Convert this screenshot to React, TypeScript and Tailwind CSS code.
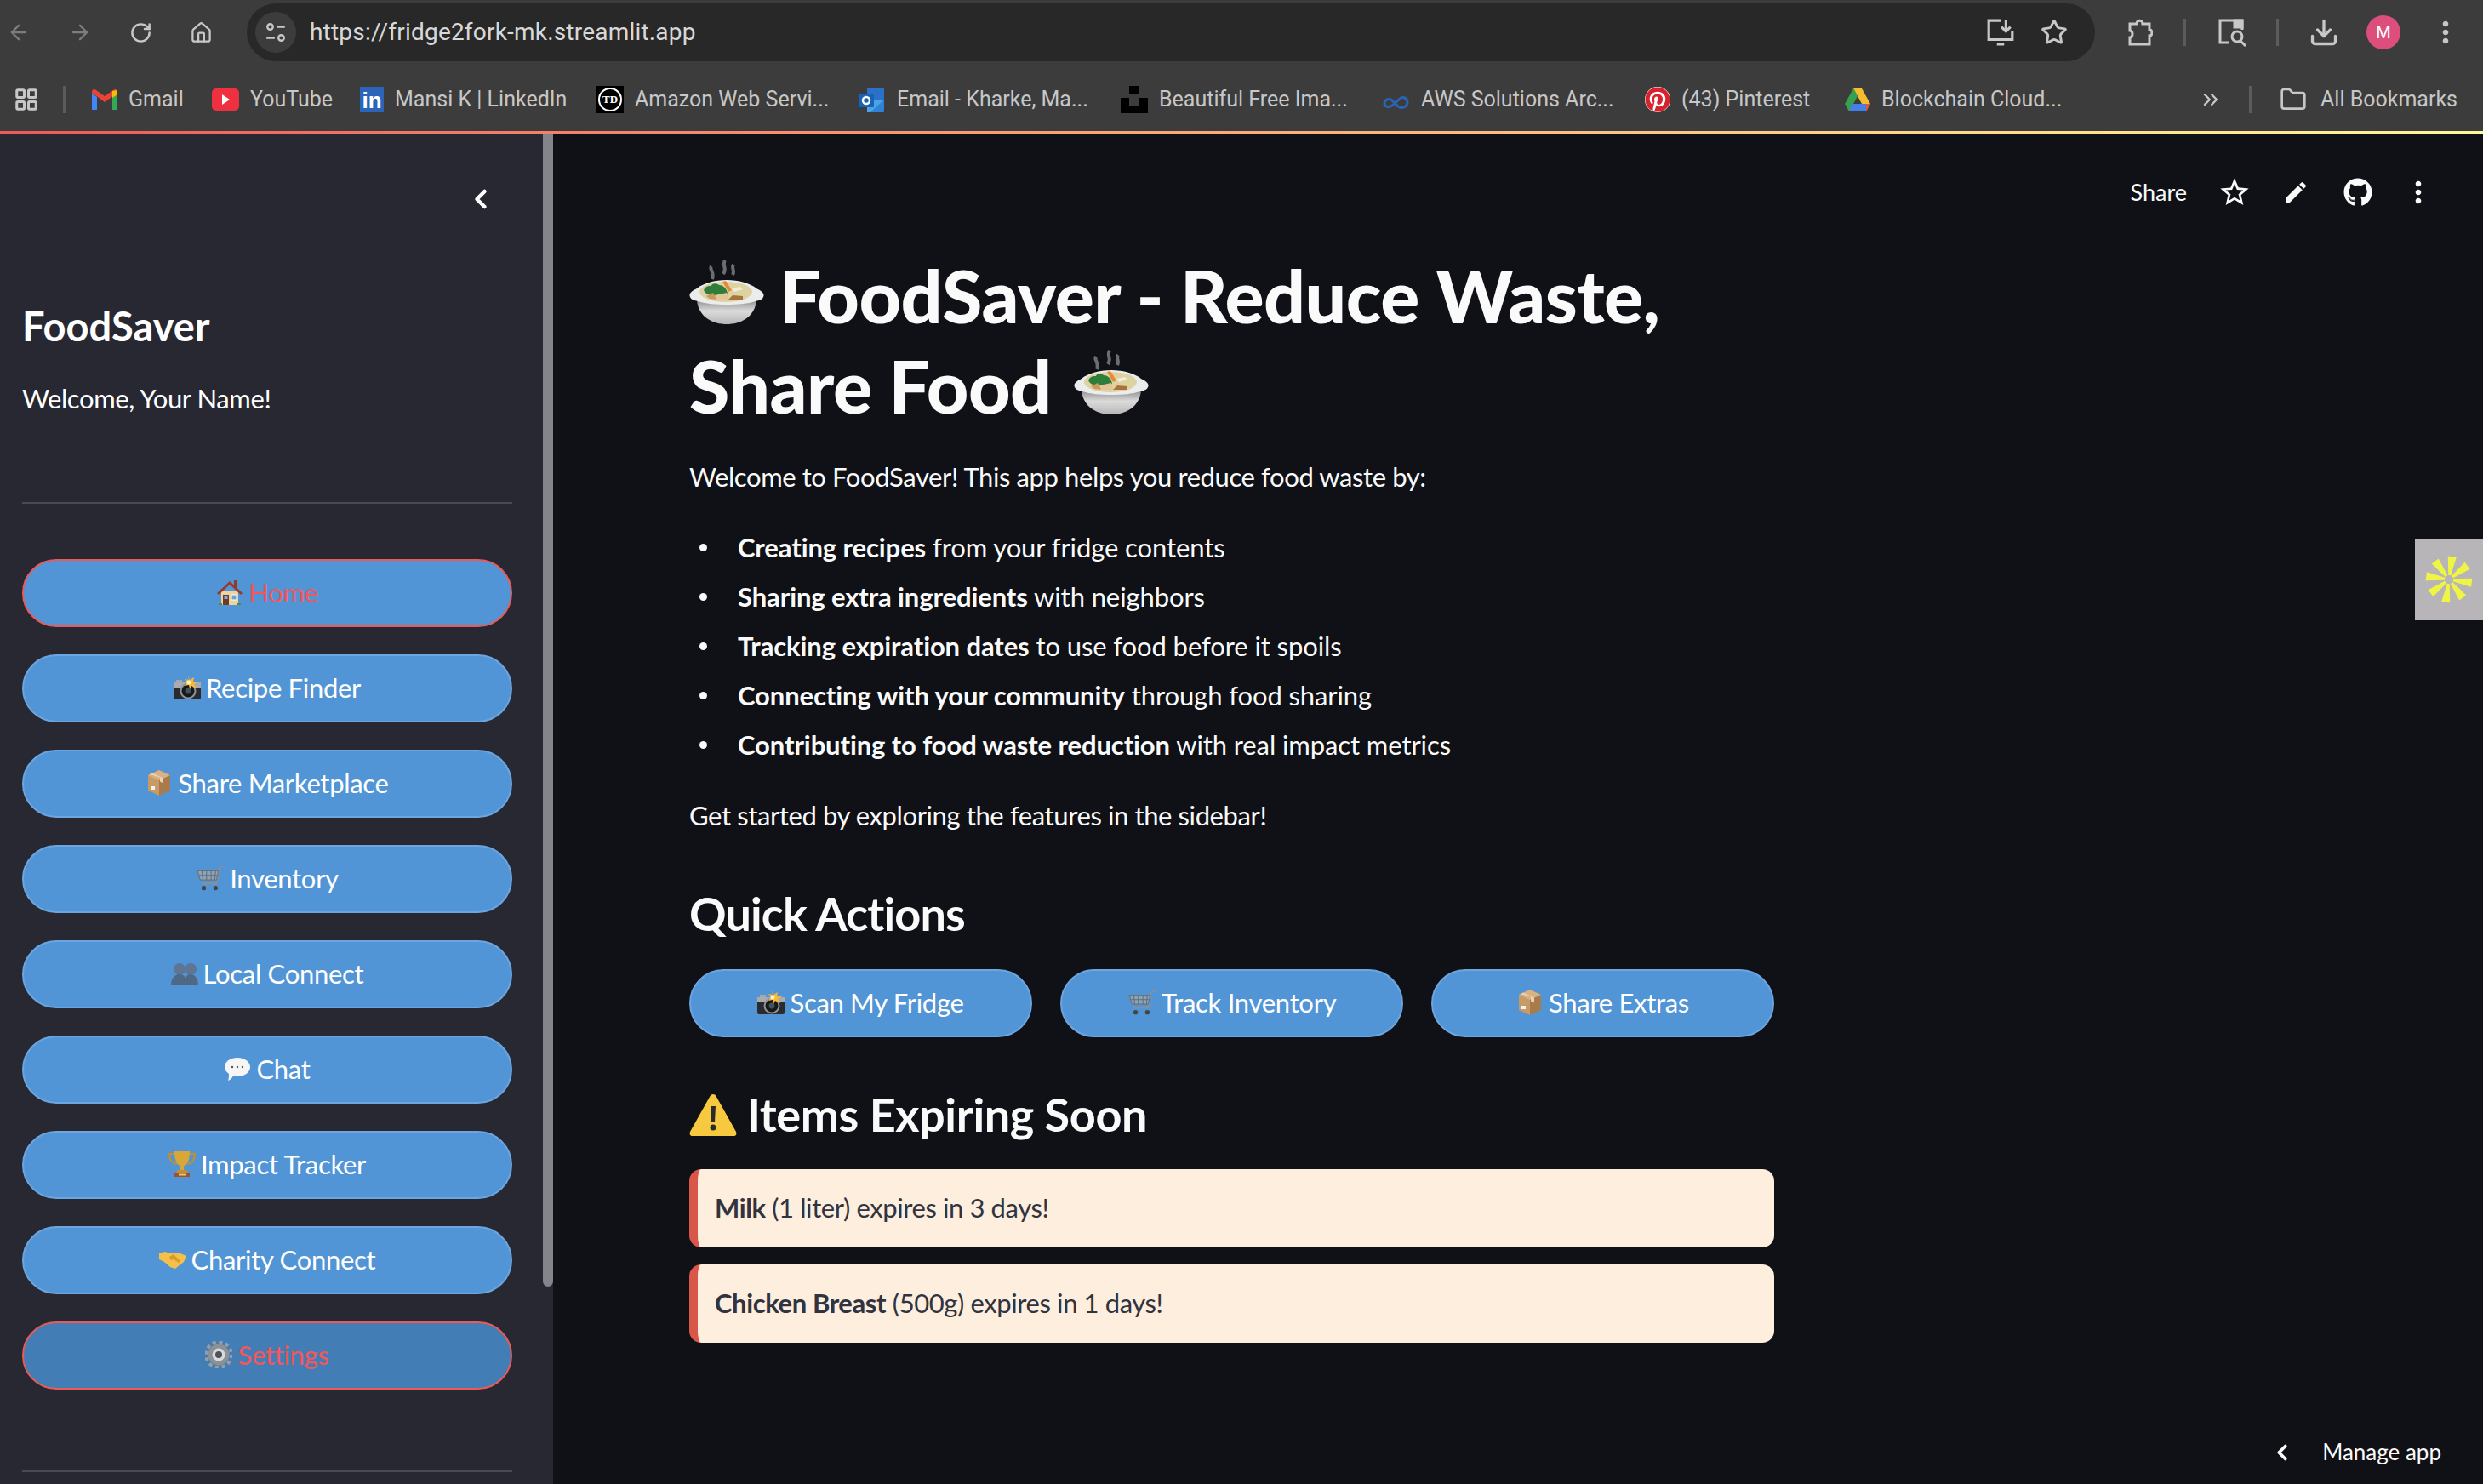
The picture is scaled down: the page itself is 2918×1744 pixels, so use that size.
import React from 'react';
import { ArrowLeft, ArrowRight, RotateCw, House, Star, Download, Folder, ChevronsRight, ChevronLeft, LayoutGrid } from 'lucide-react';
import { FaGithub, FaPinterest } from 'react-icons/fa';
import { MdEdit, MdMoreVert, MdStarBorder } from 'react-icons/md';

const Bowl = ({ className }: { className: string }) => (
    <svg viewBox="0 0 88 76" className={className}>
        <defs>
            <linearGradient id="bowlBody" x1="0" y1="0" x2="0" y2="1">
                <stop offset="0" stopColor="#8f8f8f" />
                <stop offset="0.45" stopColor="#dcdcdc" />
                <stop offset="1" stopColor="#b5b5b5" />
            </linearGradient>
        </defs>
        <path d="M26 8c-3 4 4 6 1 15M42 1c-4 6 3 9-2 16M52 6c-3 4 2 7-1 12" stroke="#b9b9b9" strokeWidth="4" fill="none" opacity="0.55" />
        <path d="M9 48C11 68 28 76 44 76S77 68 79 48z" fill="url(#bowlBody)" />
        <path d="M1 44c-2-4 2-7 8-10C16 28 30 24 44 24s28 4 35 10c6 3 10 6 8 10-1 3-5 4-9 5-9 3-21 4-34 4s-25-1-34-4c-4-1-8-2-9-5z" fill="#ececec" />
        <ellipse cx="43" cy="38" rx="31" ry="12" fill="#dcd2a2" />
        <path d="M17 36c3-6 7-5 9-5 0-3 6-4 9-1 4 0 9 3 10 10-4 3-14 4-20 2-4-1-7-3-8-6z" fill="#2f7d3a" />
        <path d="M39 26l4-1 7 11-4 2z" fill="#e8893a" />
        <path d="M20 43l8-4 5 8-9-1z" fill="#c99a5b" />
        <path d="M30 42l14-3 2 8H32z" fill="#e4c596" />
        <path d="M46 47l5-5 12 1 0 4z" fill="#a8743c" />
        <path d="M50 34l10-2 3 3-10 3z" fill="#f2ecd6" />
    </svg>
);

const Emoji = ({ name }: { name: string }) => {
    if (name === 'house')
        return (
            <svg viewBox="0 0 32 32" className="w-[32px] h-[34px]">
                <rect x="21" y="2" width="4" height="10" fill="#8c3b2c" />
                <rect x="6" y="14" width="20" height="17" fill="#ecd3a0" />
                <path d="M1 17L16 3l15 14-2 2L16 7 3 19z" fill="#9b3a2c" />
                <rect x="8" y="19" width="7" height="12" fill="#6f3a28" />
                <rect x="9.5" y="21" width="4" height="3" fill="#7fb0dc" />
                <rect x="18" y="19" width="6" height="6" fill="#6ea3d4" stroke="#fff" />
                <rect x="3" y="29" width="4" height="2" fill="#5d8a33" />
                <rect x="25" y="29" width="4" height="2" fill="#5d8a33" />
            </svg>
        );
    if (name === 'camera')
        return (
            <svg viewBox="0 0 32 28" className="w-[32px] h-[28px]">
                <rect x="3" y="5" width="7" height="4" fill="#a5a7aa" />
                <rect x="0" y="8" width="32" height="20" rx="2" fill="#2a2b2e" />
                <rect x="0" y="8" width="32" height="6" fill="#a9abae" />
                <circle cx="17" cy="18" r="8.500" fill="#17181a" stroke="#8f9296" strokeWidth="2" />
                <circle cx="17" cy="18" r="3.500" fill="#43505e" />
                <path d="M17 0l2 5 5-3-1 5 6 0-5 3 3 5-6-3-2 4-1-5-5 1 3-4-3-4 5 1z" fill="#f9b83a" />
                <circle cx="18" cy="8" r="2.500" fill="#fff3c0" />
            </svg>
        );
    if (name === 'box')
        return (
            <svg viewBox="0 0 32 32" className="w-[32px] h-[34px]">
                <path d="M16 1l13 6v18l-13 6z" fill="#a87b4c" />
                <path d="M16 1L3 7v18l13 6z" fill="#c79a66" />
                <path d="M3 7l13 6 13-6-13-6z" fill="#d8b184" />
                <path d="M8 4.500l13 6v6l-4 -2v-5L5 6z" fill="#e9d3b4" />
                <rect x="6" y="20" width="5" height="4" fill="#f2f2f2" />
            </svg>
        );
    if (name === 'cart')
        return (
            <svg viewBox="0 0 32 32" className="w-[34px] h-[34px]" fill="none">
                <path d="M30 3l-4 2-3 17H7" stroke="#8c8f94" strokeWidth="1.6" />
                <path d="M2 8h23l-2 10H5z" fill="#8da3b8" stroke="#6f7378" />
                <path d="M7 8l1 10M12 8v10M17 8v10M22 8l-1 10M3 13h21" stroke="#5f6f80" />
                <circle cx="9" cy="27" r="2.500" fill="#444" />
                <circle cx="22" cy="27" r="2.500" fill="#444" />
            </svg>
        );
    if (name === 'people')
        return (
            <svg viewBox="0 0 32 32" className="w-[32px] h-[32px]" fill="#5d7694">
                <circle cx="10" cy="11" r="7" />
                <circle cx="23" cy="11" r="7" />
                <path d="M0 30c0-8 4-13 10-13s8 4 8 13zM15 30c0-8 3-13 8-13s9 5 9 13z" fill="#4f6886" />
            </svg>
        );
    if (name === 'chat')
        return (
            <svg viewBox="0 0 32 32" className="w-[32px] h-[32px]">
                <path d="M16 3c9 0 15 5 15 11s-6 11-15 11c-2 0-4 0-5-1-1 3-3 5-6 6 1-3 1-5 1-8-3-2-5-5-5-8C1 8 7 3 16 3z" fill="#f6f6f6" />
                <circle cx="10" cy="14" r="1.200" fill="#555" />
                <circle cx="16" cy="14" r="1.200" fill="#555" />
                <circle cx="22" cy="14" r="1.200" fill="#555" />
            </svg>
        );
    if (name === 'trophy')
        return (
            <svg viewBox="0 0 32 32" className="w-[32px] h-[32px]" fill="none">
                <path d="M8 4H1c0 7 3 11 9 12M24 4h7c0 7-3 11-9 12" stroke="#c4902a" strokeWidth="2" />
                <path d="M7 1h18c0 11-3 16-7 17v5h-4v-5C10 17 7 12 7 1z" fill="#d9a63a" />
                <rect x="10" y="23" width="12" height="3" fill="#c4902a" />
                <rect x="7" y="26" width="18" height="5" fill="#a1522c" />
                <rect x="12" y="27.500" width="8" height="2" fill="#e8c46a" />
            </svg>
        );
    if (name === 'hands')
        return (
            <svg viewBox="0 0 32 24" className="w-[32px] h-[24px]">
                <path d="M0 5l7-2 6 2 5-1 7 1 7 3-3 7-4 3-6 5-6-2-7-6-6-3z" fill="#f5c04a" />
                <path d="M12 9l5-3 8 8-2 2-6-4-3 1z" fill="#dd9a2c" />
            </svg>
        );
    if (name === 'gear')
        return (
            <svg viewBox="0 0 32 32" className="w-[32px] h-[32px]">
                <circle cx="16" cy="16" r="15" fill="none" stroke="#9a9ea3" strokeWidth="4" strokeDasharray="4 3.850" />
                <circle cx="16" cy="16" r="12.500" fill="#8d9196" />
                <circle cx="16" cy="16" r="7.500" fill="#d7d9dc" />
                <circle cx="16" cy="16" r="4" fill="#4f5257" />
            </svg>
        );
    return null;
};

const navItems = [
    { emoji: 'house', label: 'Home', active: true },
    { emoji: 'camera', label: 'Recipe Finder' },
    { emoji: 'box', label: 'Share Marketplace' },
    { emoji: 'cart', label: 'Inventory' },
    { emoji: 'people', label: 'Local Connect' },
    { emoji: 'chat', label: 'Chat' },
    { emoji: 'trophy', label: 'Impact Tracker' },
    { emoji: 'hands', label: 'Charity Connect' },
    { emoji: 'gear', label: 'Settings', active: true, dark: true },
];

const bullets = [
    ['Creating recipes', ' from your fridge contents'],
    ['Sharing extra ingredients', ' with neighbors'],
    ['Tracking expiration dates', ' to use food before it spoils'],
    ['Connecting with your community', ' through food sharing'],
    ['Contributing to food waste reduction', ' with real impact metrics'],
];

const Favicon = ({ name }: { name: string }) => {
    if (name === 'gmail')
        return (
            <svg viewBox="0 0 30 24" className="w-[30px] h-[30px]">
                <path d="M0 4v20h6V9z" fill="#4285f4" />
                <path d="M24 9v15h6V4z" fill="#34a853" />
                <path d="M0 4l15 11L30 4v-1c0-3-3-4-5-2L15 8 5 1C3-1 0 0 0 3z" fill="#ea4335" />
                <path d="M24 2l6-1v5l-6 4z" fill="#fbbc04" />
            </svg>
        );
    if (name === 'youtube')
        return (
            <div className="w-[32px] h-[26px] rounded-[5px] bg-[#ee3040] flex items-center justify-center">
                <div className="w-0 h-0 border-y-[6px] border-y-transparent border-l-[9px] border-l-white" />
            </div>
        );
    if (name === 'linkedin')
        return <div className="w-[28px] h-[30px] bg-[#2b64b8] text-white font-bold text-[26px] leading-[32px] text-center font-['Liberation_Sans',sans-serif]">in</div>;
    if (name === 'td')
        return (
            <div className="w-[32px] h-[32px] bg-black flex items-center justify-center">
                <div className="w-[28px] h-[28px] rounded-full border-2 border-white text-white text-[13px] leading-[24px] font-bold text-center font-['Liberation_Serif',serif]">TD</div>
            </div>
        );
    if (name === 'outlook')
        return (
            <svg viewBox="0 0 32 30" className="w-[32px] h-[30px]">
                <rect x="10" y="1" width="20" height="14" fill="#2a71c9" />
                <path d="M10 15h20v13a2 2 0 0 1-2 2H10z" fill="#4aa3e8" />
                <path d="M14 30l16-15v13a2 2 0 0 1-2 2z" fill="#2d83d6" />
                <rect x="0" y="8" width="18" height="16" rx="1" fill="#1862b8" />
                <circle cx="9" cy="16" r="4" fill="none" stroke="#fff" strokeWidth="2.500" />
            </svg>
        );
    if (name === 'unsplash')
        return (
            <svg viewBox="0 0 32 32" className="w-[32px] h-[32px]">
                <rect x="10" y="0" width="12" height="9" fill="#000" />
                <path d="M0 14h10v9h12v-9h10v18H0z" fill="#000" />
            </svg>
        );
    if (name === 'aws')
        return (
            <svg viewBox="0 0 33 24" className="w-[33px] h-[24px]" fill="none" stroke="#2a64b4" strokeWidth="3">
                <path d="M3 17c0-6 7-7 10-3l6 6c4 3 11 1 11-5 0-5-6-7-9-4l-9 8c-4 3-9 1-9-2z" />
            </svg>
        );
    if (name === 'pinterest') return <FaPinterest className="w-[30px] h-[30px] text-[#d8232f] bg-white rounded-full" />;
    return (
        <svg viewBox="0 0 30 27" className="w-[30px] h-[27px]">
            <path d="M10 0h10l10 18H20z" fill="#f5bc2f" />
            <path d="M10 0l5 9L5 27l-5-9z" fill="#35a04d" />
            <path d="M8 18h22l-5 9H5z" fill="#4580e8" />
            <path d="M25 27l5-9h-5z" fill="#e2553c" />
        </svg>
    );
};

const bookmarks = [
    { icon: 'gmail', title: 'Gmail', width: 'w-[141px]' },
    { icon: 'youtube', title: 'YouTube', width: 'w-[174px]' },
    { icon: 'linkedin', title: 'Mansi K | LinkedIn', width: 'w-[278px]' },
    { icon: 'td', title: 'Amazon Web Servi...', width: 'w-[308px]' },
    { icon: 'outlook', title: 'Email - Kharke, Ma...', width: 'w-[308px]' },
    { icon: 'unsplash', title: 'Beautiful Free Ima...', width: 'w-[307px]' },
    { icon: 'aws', title: 'AWS Solutions Arc...', width: 'w-[309px]' },
    { icon: 'pinterest', title: '(43) Pinterest', width: 'w-[235px]' },
    { icon: 'drive', title: 'Blockchain Cloud...', width: 'w-[280px]' },
];

const ChromeBar = () => (
    <div className="bg-[#3c3c3c] text-[#c7c7c7] font-['Roboto',sans-serif]">
        <div className="h-[76px] pt-[4px] flex items-start">
            <div className="w-[290px] h-[68px] flex items-center pl-[8px] gap-[44px] shrink-0">
                <ArrowLeft size={28} strokeWidth={2} className="text-[#7d7d7d]" />
                <ArrowRight size={28} strokeWidth={2} className="text-[#7d7d7d]" />
                <RotateCw size={27} strokeWidth={2.200} />
                <House size={27} strokeWidth={2} />
            </div>
            <div className="w-[2172px] h-[68px] rounded-full bg-[#282828] flex items-center pl-[10px] pr-[32px] shrink-0">
                <div className="w-[48px] h-[48px] rounded-full bg-[#3c3c3c] flex items-center justify-center">
                    <svg viewBox="0 0 24 24" className="w-[26px] h-[26px]" fill="none" stroke="currentColor" strokeWidth="2.200">
                        <circle cx="6" cy="6" r="3" />
                        <path d="M13 6h9M2 18h9" />
                        <circle cx="18" cy="18" r="3" />
                    </svg>
                </div>
                <span className="ml-[16px] text-[28px] tracking-[0.2px] text-[#d8d8d8]">https://fridge2fork-mk.streamlit.app</span>
                <div className="ml-auto flex items-center gap-[30px]">
                    <svg viewBox="0 0 32 32" className="w-[34px] h-[34px]" fill="none" stroke="currentColor" strokeWidth="3">
                        <path d="M16 3H3v21h26v-9M12 29h8M22 2v13M17 10l5 5 5-5" />
                    </svg>
                    <Star size={32} strokeWidth={2.200} />
                </div>
            </div>
            <div className="h-[68px] flex items-center pl-[38px]">
                <svg viewBox="0 0 30 32" className="w-[30px] h-[32px]" fill="none" stroke="currentColor" strokeWidth="3">
                    <path d="M3 6h8c0-5 7-5 7 0h8v7c4 0 4 7 0 7v10H3v-8c4 0 4-8 0-8z" />
                </svg>
                <div className="w-[3px] h-[32px] bg-[#5c5c5c] ml-[36px]" />
                <svg viewBox="0 0 36 36" className="w-[36px] h-[36px] ml-[37px]" fill="none" stroke="currentColor" strokeWidth="3">
                    <path d="M14 30H3V4h26v11" />
                    <path d="M20 4h9v8h-9z" fill="currentColor" />
                    <circle cx="23" cy="23" r="6" />
                    <path d="M27 28l6 6" />
                </svg>
                <div className="w-[3px] h-[32px] bg-[#5c5c5c] ml-[33px]" />
                <Download size={36} strokeWidth={2.200} className="ml-[35px]" />
                <div className="w-[40px] h-[40px] rounded-full bg-[#dc4f7d] text-white text-[20px] flex items-center justify-center ml-[32px]">M</div>
                <MdMoreVert size={40} className="ml-[33px]" />
            </div>
        </div>
        <div className="h-[78px] flex items-center pt-[4px] pl-[16px] text-[25px]">
            <LayoutGrid size={30} strokeWidth={2.400} className="shrink-0" />
            <div className="w-[3px] h-[32px] bg-[#5c5c5c] ml-[28px] mr-[31px] shrink-0" />
            {bookmarks.map((b) => (
                <div key={b.title} className={`${b.width} flex items-center gap-[13px] shrink-0 whitespace-nowrap`}>
                    <Favicon name={b.icon} />
                    <span>{b.title}</span>
                </div>
            ))}
            <ChevronsRight size={28} className="ml-[136px] shrink-0" />
            <div className="w-[3px] h-[32px] bg-[#5c5c5c] ml-[31px] mr-[33px] shrink-0" />
            <Folder size={32} strokeWidth={2} className="shrink-0" />
            <span className="ml-[16px] whitespace-nowrap">All Bookmarks</span>
        </div>
        <div className="h-[4px] bg-linear-to-r from-[#ec5a5a] to-[#fff79a]" />
    </div>
);

const PillButton = ({ emoji, label, active, dark, w }: { emoji: string; label: string; active?: boolean; dark?: boolean; w: string }) => (
    <button
        className={`${w} h-[80px] rounded-[40px] border-2 flex items-center justify-center gap-[6px] text-[31px] tracking-[-0.3px] pb-[2px] ${
            active ? 'border-[#ea5a5a] text-[#f2575b]' : 'border-[#6ca5e0] text-white'
        } ${dark ? 'bg-[#437db5]' : 'bg-[#5295d6]'}`}
    >
        <Emoji name={emoji} />
        <span>{label}</span>
    </button>
);

const Sidebar = () => (
    <aside className="relative w-[650px] h-[1586px] shrink-0 bg-[#272831] text-white px-[26px] overflow-hidden">
        <div className="absolute top-0 right-0 w-[12px] h-[1354px] bg-[#85848b] rounded-b-[6px]" />
        <div className="h-[152px] flex items-center justify-end pr-[41px]">
            <ChevronLeft size={36} strokeWidth={3} />
        </div>
        <h2 className="mt-[44px] text-[47px] leading-[58px] font-bold">FoodSaver</h2>
        <p className="mt-[28px] text-[31px] leading-[56px] tracking-[-0.4px]">Welcome, Your Name!</p>
        <div className="w-[576px] h-[2px] bg-[#494a53] mt-[94px]" />
        <div className="w-[576px] mt-[65px] flex flex-col gap-[32px]">
            {navItems.map((item) => (
                <PillButton key={item.label} emoji={item.emoji} label={item.label} active={item.active} dark={item.dark} w="w-full" />
            ))}
        </div>
        <div className="w-[576px] h-[2px] bg-[#494a53] mt-[95px]" />
    </aside>
);

const Main = () => (
    <main className="relative flex-1 h-[1586px] bg-[#0f1116] text-[#fafafa] overflow-hidden">
        <div className="h-[136px] flex items-center justify-end pr-[56px] text-[27px]">
            <span>Share</span>
            <MdStarBorder size={40} className="ml-[36px]" />
            <MdEdit size={32} className="ml-[36px]" />
            <FaGithub size={34} className="ml-[40px]" />
            <MdMoreVert size={40} className="ml-[34px]" />
        </div>
        <div className="ml-[160px] w-[1275px]">
            <h1 className="text-[86px] leading-[106px] font-black tracking-[-0.5px] w-[1200px]">
                <Bowl className="inline-block w-[88px] h-[76px] mr-[18px] align-[-1px]" />
                FoodSaver - Reduce Waste, Share Food
                <Bowl className="inline-block w-[88px] h-[76px] ml-[26px] align-[-1px]" />
            </h1>
            <div className="text-[31px] leading-[58px] tracking-[-0.4px]">
                <p className="mt-[25px]">Welcome to FoodSaver! This app helps you reduce food waste by:</p>
                <ul className="mt-[25px] tracking-[-0.1px]">
                    {bullets.map(([strong, rest]) => (
                        <li key={strong} className="flex items-center whitespace-pre">
                            <span className="w-[9px] h-[9px] rounded-full bg-[#fafafa] ml-[12px] mr-[36px]" />
                            <span>
                                <strong className="font-bold">{strong}</strong>
                                {rest}
                            </span>
                        </li>
                    ))}
                </ul>
                <p className="mt-[25px]">Get started by exploring the features in the sidebar!</p>
            </div>
            <h2 className="mt-[53px] text-[54px] leading-[68px] font-bold tracking-[-0.9px]">Quick Actions</h2>
            <div className="mt-[31px] flex gap-[33px]">
                <PillButton emoji="camera" label="Scan My Fridge" w="flex-1" />
                <PillButton emoji="cart" label="Track Inventory" w="flex-1" />
                <PillButton emoji="box" label="Share Extras" w="flex-1" />
            </div>
            <h2 className="mt-[57px] text-[54px] leading-[68px] font-bold tracking-[-0.4px] flex items-center gap-[12px]">
                <svg viewBox="0 0 56 50" className="w-[56px] h-[50px]">
                    <path d="M28 1c2 0 3 1 4 3l23 41c1 3 0 5-3 5H4c-3 0-4-2-3-5L24 4c1-2 2-3 4-3z" fill="#f7c93e" />
                    <path d="M25 15h6l-1 19h-4z" fill="#2b2b2b" />
                    <circle cx="28" cy="40" r="3.500" fill="#2b2b2b" />
                </svg>
                Items Expiring Soon
            </h2>
            <div className="mt-[30px] flex flex-col gap-[20px] tracking-[-0.4px]">
                <div className="h-[92px] rounded-[14px] bg-[#fdeedd] border-l-[10px] border-[#d9574a] flex items-center pl-[20px] pb-[2px] text-[31px] text-[#31333f]">
                    <span><strong className="font-bold">Milk</strong> (1 liter) expires in 3 days!</span>
                </div>
                <div className="h-[92px] rounded-[14px] bg-[#fdeedd] border-l-[10px] border-[#d9574a] flex items-center pl-[20px] pb-[2px] text-[31px] text-[#31333f]">
                    <span><strong className="font-bold">Chicken Breast</strong> (500g) expires in 1 days!</span>
                </div>
            </div>
        </div>
        <div className="absolute right-0 top-[475px] w-[80px] h-[96px] bg-[#b7b5b7] flex items-center justify-center">
            <svg viewBox="-28 -28 56 56" className="w-[56px] h-[56px]" fill="#eef542">
                {[8, 53, 98, 143, 188, 233, 278, 323].map((deg) => (
                    <path key={deg} d="M-1.500 -5L1.500 -5L5 -27L-5 -27Z" transform={`rotate(${deg})`} />
                ))}
            </svg>
        </div>
        <div className="absolute bottom-[18px] right-[49px] flex items-center text-[26px]">
            <ChevronLeft size={30} strokeWidth={3} />
            <span className="ml-[32px]">Manage app</span>
        </div>
    </main>
);

export default function App() {
    return (
        <div className="w-[2918px] h-[1744px] overflow-hidden font-['Lato',sans-serif]">
            <ChromeBar />
            <div className="flex">
                <Sidebar />
                <Main />
            </div>
        </div>
    );
}
